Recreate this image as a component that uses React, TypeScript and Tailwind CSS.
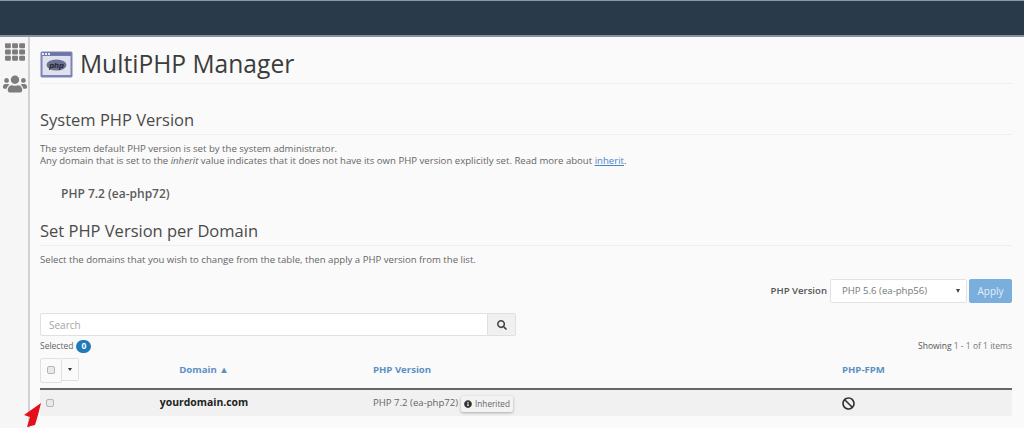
import { FaTh, FaUsers, FaSearch, FaBan, FaInfoCircle } from "react-icons/fa";

function PhpIcon() {
  return (
    <svg width="33" height="27" viewBox="0 0 33 27" className="block">
      <rect x="0.5" y="0.5" width="32" height="26" rx="1.5" fill="#7c83b5" />
      <rect x="2" y="1.5" width="29" height="3" fill="#6d74a8" />
      <rect x="2.5" y="5" width="28" height="19" fill="#dfe2ee" />
      <rect x="2" y="2" width="2" height="2" fill="#e8eaf4" />
      <rect x="5" y="2" width="2" height="2" fill="#e8eaf4" />
      <rect x="8" y="2" width="2" height="2" fill="#e8eaf4" />
      <ellipse cx="16.5" cy="14" rx="10" ry="5.5" fill="#6b7191" />
      <text x="16.5" y="16.5" textAnchor="middle" fontSize="8" fontStyle="italic" fontWeight="700" fontFamily="'Liberation Sans', sans-serif" fill="#20222e">php</text>
    </svg>
  );
}

function Check() {
  return <span className="block w-[8px] h-[8px] rounded-[2px] border border-[#b5b5b5] bg-[#e9e9e9]" />;
}

export default function App() {
  return (
    <div className="w-[1024px] h-[428px] overflow-hidden flex flex-col bg-[#fafafa] font-['Open_Sans',sans-serif] text-[#666] text-[9.6px] relative">
      <div className="h-[37px] shrink-0 bg-[#293a4a] border-t border-[#8b97a3] border-b-2 border-b-[#8a9096]" />
      <div className="flex flex-1 min-h-0">
        <aside className="w-[31px] shrink-0 bg-[#f6f6f6] border-r-2 border-[#d2d2d2] flex flex-col items-center pt-[5px] pl-[3px] text-[#7d7d7d] relative left-[-1px]">
          <FaTh className="w-[20px] h-[20px]" />
          <FaUsers className="w-[24px] h-[24px] mt-[10px]" />
        </aside>
        <main className="flex-1 min-w-0 pl-[9px] pr-[12px]">
          <div className="flex items-center gap-[7px] h-[47px] pt-[9px] border-b border-[#eeeeee]">
            <PhpIcon />
            <h1 className="text-[24.6px] leading-none font-normal text-[#3c3c3c]">MultiPHP Manager</h1>
          </div>
          <h2 className="mt-[24px] text-[16.5px] leading-[23px] text-[#4a4a4a] border-b border-[#eeeeee] pb-[3px]">System PHP Version</h2>
          <p className="mt-[8px] leading-[12px]">
            The system default PHP version is set by the system administrator.
            <br />
            Any domain that is set to the <i>inherit</i> value indicates that it does not have its own PHP version explicitly set. Read more about <a className="text-[#4a86c5] underline">inherit</a>.
          </p>
          <div className="mt-[19px] ml-[21px] text-[12px] leading-[16px] font-semibold text-[#5a5a5a]">PHP 7.2 (ea-php72)</div>
          <h2 className="mt-[17px] text-[16.5px] leading-[23px] text-[#4a4a4a] border-b border-[#eeeeee] pb-[3px]">Set PHP Version per Domain</h2>
          <p className="mt-[8px] leading-[12px]">Select the domains that you wish to change from the table, then apply a PHP version from the list.</p>

          <div className="mt-[13px] flex justify-end items-center h-[24px]">
            <span className="font-semibold text-[#555] mr-[3px]">PHP Version</span>
            <div className="w-[137px] h-[24px] bg-white border border-[#e2e2e2] rounded-[2px] flex items-center justify-between pl-[11px] pr-[6px] text-[#777]">
              <span>PHP 5.6 (ea-php56)</span>
              <span className="w-0 h-0 border-x-[2.5px] border-x-transparent border-t-[4px] border-t-[#444]" />
            </div>
            <button className="ml-[2px] w-[43px] h-[24px] bg-[#79aedd] rounded-[2px] text-[#e4eef8] text-[10px]">Apply</button>
          </div>

          <div className="mt-[10px] w-[476px] h-[23px] flex">
            <div className="flex-1 bg-white border border-[#e0e0e0] rounded-l-[2px] pl-[8px] pt-[1px] flex items-center text-[#a5a5a5] text-[10px]">Search</div>
            <div className="w-[28px] bg-[#f0f0f0] border border-l-0 border-[#e0e0e0] rounded-r-[2px] flex items-center justify-center text-[#444]">
              <FaSearch className="w-[10px] h-[10px]" />
            </div>
          </div>

          <div className="mt-[3px] flex justify-between items-center h-[14px] text-[8.5px]">
            <div className="flex items-center gap-[3px] text-[#666]">
              <span>Selected</span>
              <span className="w-[15px] h-[13px] rounded-full bg-[#1f7ab8] text-white font-bold flex items-center justify-center">0</span>
            </div>
            <div className="text-[#777]"><span className="text-[#555] font-medium">Showing</span> 1 - 1 of 1 items</div>
          </div>

          <div className="mt-[2px] grid grid-cols-[39px_250px_513px_1fr] items-center h-[29px] border-b-2 border-[#666] text-[#5a90c4] font-bold pt-[1px] pb-[3px] box-content">
            <div className="flex items-start h-[25px] -mt-[1px]">
              <div className="w-[22px] h-[25px] bg-[#fafafa] border border-[#e0e0e0] rounded-[2px] flex items-start justify-center pt-[7px] shrink-0"><Check /></div>
              <div className="w-[17px] h-[23px] border border-l-0 border-[#e0e0e0] rounded-r-[2px] flex items-center justify-center shrink-0">
                <span className="w-0 h-0 border-x-[2.5px] border-x-transparent border-t-[3px] border-t-[#333]" />
              </div>
            </div>
            <div className="text-center">Domain ▲</div>
            <div className="pl-[44px]">PHP Version</div>
            <div>PHP-FPM</div>
          </div>

          <div className="grid grid-cols-[39px_250px_513px_1fr] items-center h-[26px] bg-[#f1f1f1]">
            <div className="pl-[6px]"><Check /></div>
            <div className="text-center text-[10.4px] font-bold text-[#222]">yourdomain.com</div>
            <div className="pl-[44px] flex items-center text-[#666] whitespace-nowrap">
              <span>PHP 7.2 (ea-php72)</span>
            </div>
            <div className="text-[#333]"><FaBan className="w-[13px] h-[13px]" /></div>
          </div>
        </main>
      </div>
      <div className="absolute left-[461px] top-[396px] h-[16px] w-[52px] bg-[#f3f3f3] rounded-[2px] shadow-[0_1px_3px_rgba(0,0,0,0.3)] flex items-center justify-center gap-[3px] text-[8.2px] text-[#666]">
        <FaInfoCircle className="w-[8px] h-[8px] text-[#333]" />
        <span>Inherited</span>
      </div>
      <svg className="absolute left-[24px] top-[403px]" width="18" height="25" viewBox="0 0 18 25">
        <path d="M17 0 L0 12 L6 14 L3 24 L11 22 L14 12 Z" fill="#e3101c" />
      </svg>
    </div>
  );
}
